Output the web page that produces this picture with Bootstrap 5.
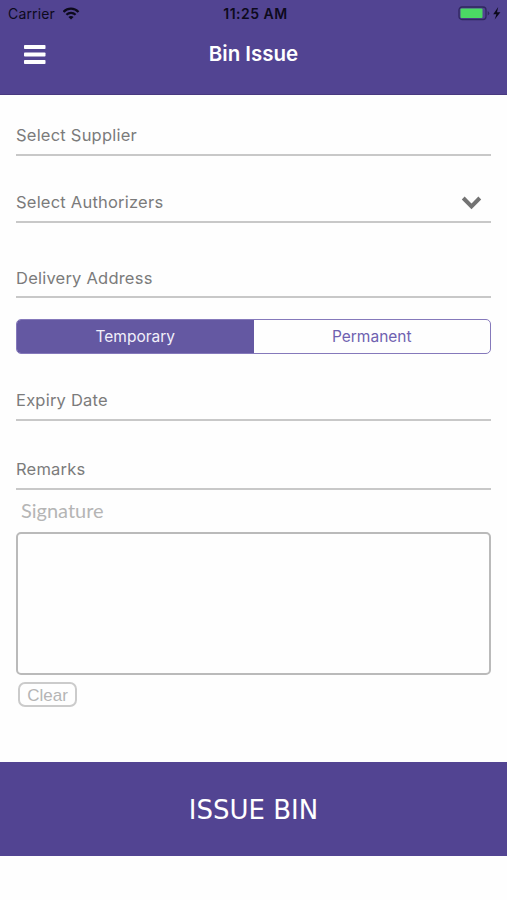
<!DOCTYPE html>
<html lang="en">
<head>
<meta charset="utf-8">
<meta name="viewport" content="width=device-width, initial-scale=1">
<title>Bin Issue</title>
<link href="https://cdn.jsdelivr.net/npm/bootstrap@5.3.0/dist/css/bootstrap.min.css" rel="stylesheet">
<style>
  body { font-family: Inter, "Liberation Sans", sans-serif; background: #fefefe; min-height: 900px; }
  .app-header { background: #524492; height: 95px; border-bottom: 1px solid #48397f; }
  .status-bar { height: 27px; padding: 0 5px 0 8px; font-size: 14px; line-height: 27px; color: #0d0a1c; }
  .status-side { flex: 1 1 0; }
  .carrier { letter-spacing: .15px; }
  .status-time { font-weight: 600; font-size: 14px; letter-spacing: .5px; padding-left: 1px; }
  .title-bar { height: 55px; padding: 0 24px; }
  .title-bar h1 { font-size: 20.5px; font-weight: 600; letter-spacing: 0; }
  .menu-btn, .menu-space { width: 22px; }
  .form-area { padding: 0 16px; }
  .field { border-bottom: 2px solid #c8c8c8; color: #7b7b7b; font-size: 16.5px; line-height: 20px; padding-bottom: 9px; letter-spacing: .22px; }
  .f-supplier { height: 61px; }
  .f-auth { height: 67px; }
  .f-address { height: 75px; padding-bottom: 8px; }
  .f-expiry { height: 67px; }
  .f-remarks { height: 69px; }
  .segments { height: 35px; margin-top: 21px; border: 1px solid #8579bb; border-radius: 5px; font-size: 15.5px; letter-spacing: 0; }
  .segments .btn { font-size: inherit; letter-spacing: inherit; color: #6f61b0; line-height: 20px; padding: 0; border: 0; border-radius: 0; }
  .segments .btn.active { background: #6458a2; color: #f1effa; }
  .sign-label { font-family: Lato, sans-serif; font-size: 20px; line-height: 24px; color: #b5b5b5; letter-spacing: 0; padding-left: 5px; margin-top: 8px; }
  .sign-box { height: 143px; margin-top: 10px; border: 2px solid #bababa; border-radius: 5px; }
  .clear-btn { width: 59px; height: 25px; margin: 7px 0 0 2px; padding: 1px 0 0; border: 2px solid #cbcbcb; border-radius: 7px; color: #b5b5b5; font: 17px/21px "Liberation Sans", sans-serif; }
  .issue-btn { height: 94px; margin-top: 55px; padding: 7px 0 6px; background: #524492; color: #fff; border: 0; border-radius: 0; font: 26px/30px "DejaVu Sans", sans-serif; }
  .issue-btn:hover { background: #524492; color: #fff; }
</style>
</head>
<body>
<header class="app-header">
  <div class="status-bar d-flex">
    <div class="status-side d-flex align-items-center">
      <span class="carrier">Carrier</span>
      <svg class="ms-2" width="17" height="13" viewBox="0 0 17 13" fill="none" stroke="#0d0a1c" stroke-width="2.2" aria-hidden="true">
        <path d="M.5 4.9C4.7.6 11.3.6 15.5 4.9M3.4 7.8c2.6-2.6 6.6-2.6 9.2 0"/>
        <path d="M8 12.5 5.4 9.9c1.5-1.3 3.7-1.3 5.2 0z" fill="#0d0a1c" stroke="none"/>
      </svg>
    </div>
    <div class="status-time">11:25 AM</div>
    <div class="status-side d-flex align-items-center justify-content-end">
      <svg width="44" height="15" viewBox="0 0 44 15" aria-hidden="true">
        <rect x="1" y="1" width="27" height="12.5" rx="3" fill="none" stroke="#30275f" stroke-width="1.3"/>
        <rect x="2.5" y="2.6" width="22" height="9.5" rx="1" fill="#4bd964"/>
        <path d="M29.7 5v4.5q1.6-.6 1.6-2.2T29.7 5z" fill="#30275f"/>
        <path d="M40.2 1 35.2 8.3h3.2L36.7 13.5 42.4 6.2H39z" fill="#0d0a1c"/>
      </svg>
    </div>
  </div>
  <div class="title-bar d-flex align-items-center justify-content-between">
    <button class="menu-btn btn p-0 border-0 d-flex" type="button" aria-label="Menu">
      <svg width="22" height="20" viewBox="0 0 22 20" fill="#fff"><rect y="0" width="21.5" height="4" rx=".8"/><rect y="7.5" width="21.5" height="4" rx=".8"/><rect y="15" width="21.5" height="4" rx=".8"/></svg>
    </button>
    <h1 class="m-0 text-white">Bin Issue</h1>
    <span class="menu-space"></span>
  </div>
</header>
<main>
  <div class="form-area">
    <div class="field f-supplier d-flex align-items-end"><span>Select Supplier</span></div>
    <div class="field f-auth d-flex align-items-end justify-content-between">
      <span>Select Authorizers</span>
      <svg class="me-2" width="22" height="20" viewBox="0 0 22 20" fill="none" stroke="#737373" stroke-width="4" aria-hidden="true"><path d="m2.2 6 8.3 8.3L18.800 6"/></svg>
    </div>
    <div class="field f-address d-flex align-items-end"><span>Delivery Address</span></div>
    <div class="segments d-flex overflow-hidden">
      <button class="btn active w-50" type="button">Temporary</button>
      <button class="btn w-50" type="button">Permanent</button>
    </div>
    <div class="field f-expiry d-flex align-items-end"><span>Expiry Date</span></div>
    <div class="field f-remarks d-flex align-items-end"><span>Remarks</span></div>
    <div class="sign-label">Signature</div>
    <div class="sign-box"></div>
    <button class="clear-btn btn d-block" type="button">Clear</button>
  </div>
  <button class="issue-btn btn d-block w-100" type="button">ISSUE BIN</button>
</main>
<script src="https://cdn.jsdelivr.net/npm/bootstrap@5.3.0/dist/js/bootstrap.bundle.min.js"></script>
</body>
</html>
